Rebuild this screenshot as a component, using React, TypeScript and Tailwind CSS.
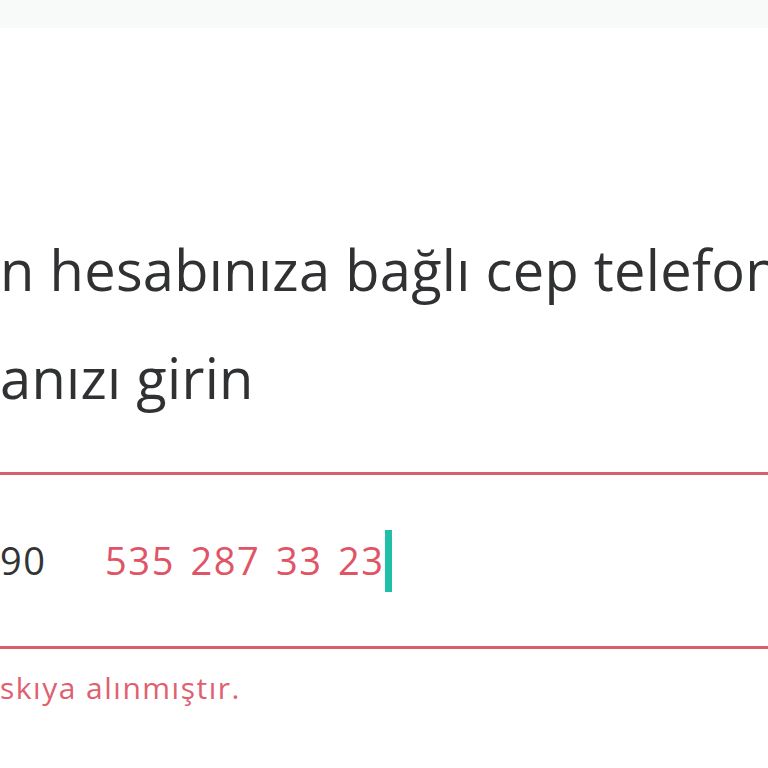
import React from "react";

export default function App() {
  return (
    <div className="w-[768px] h-[768px] bg-white overflow-hidden flex flex-col" style={{ fontFamily: "'Open Sans', 'Noto Sans', sans-serif" }}>
      <div className="h-[28px] bg-[#f8f9f9] shrink-0" />
      <div className="pt-[187px] flex flex-col shrink-0">
        <div className="whitespace-nowrap text-[56px] leading-[108px] font-medium text-[#2f3133] h-[108px] tracking-[0.3px]">n hesabınıza bağlı cep telefonu</div>
        <div className="whitespace-nowrap text-[56px] leading-[108px] font-medium text-[#2f3133] h-[108px] tracking-[0.3px]">anızı girin</div>
      </div>
      <div className="mt-[41px] border-t-[3px] border-b-[3px] border-[#d9606b] h-[177px] shrink-0 flex items-center">
        <span className="text-[38px] font-normal text-[#333] w-[105px] tracking-[1.5px]">90</span>
        <span className="text-[38px] font-normal text-[#e05566] tracking-[1.6px] [word-spacing:4px]">535 287 33 23</span>
        <span className="w-[7px] h-[62px] bg-[#1fbfa9]" />
      </div>
      <div className="text-[30px] leading-[40px] text-[#e06070] pt-[19px] whitespace-nowrap tracking-[1.5px]">skıya alınmıştır.</div>
    </div>
  );
}
